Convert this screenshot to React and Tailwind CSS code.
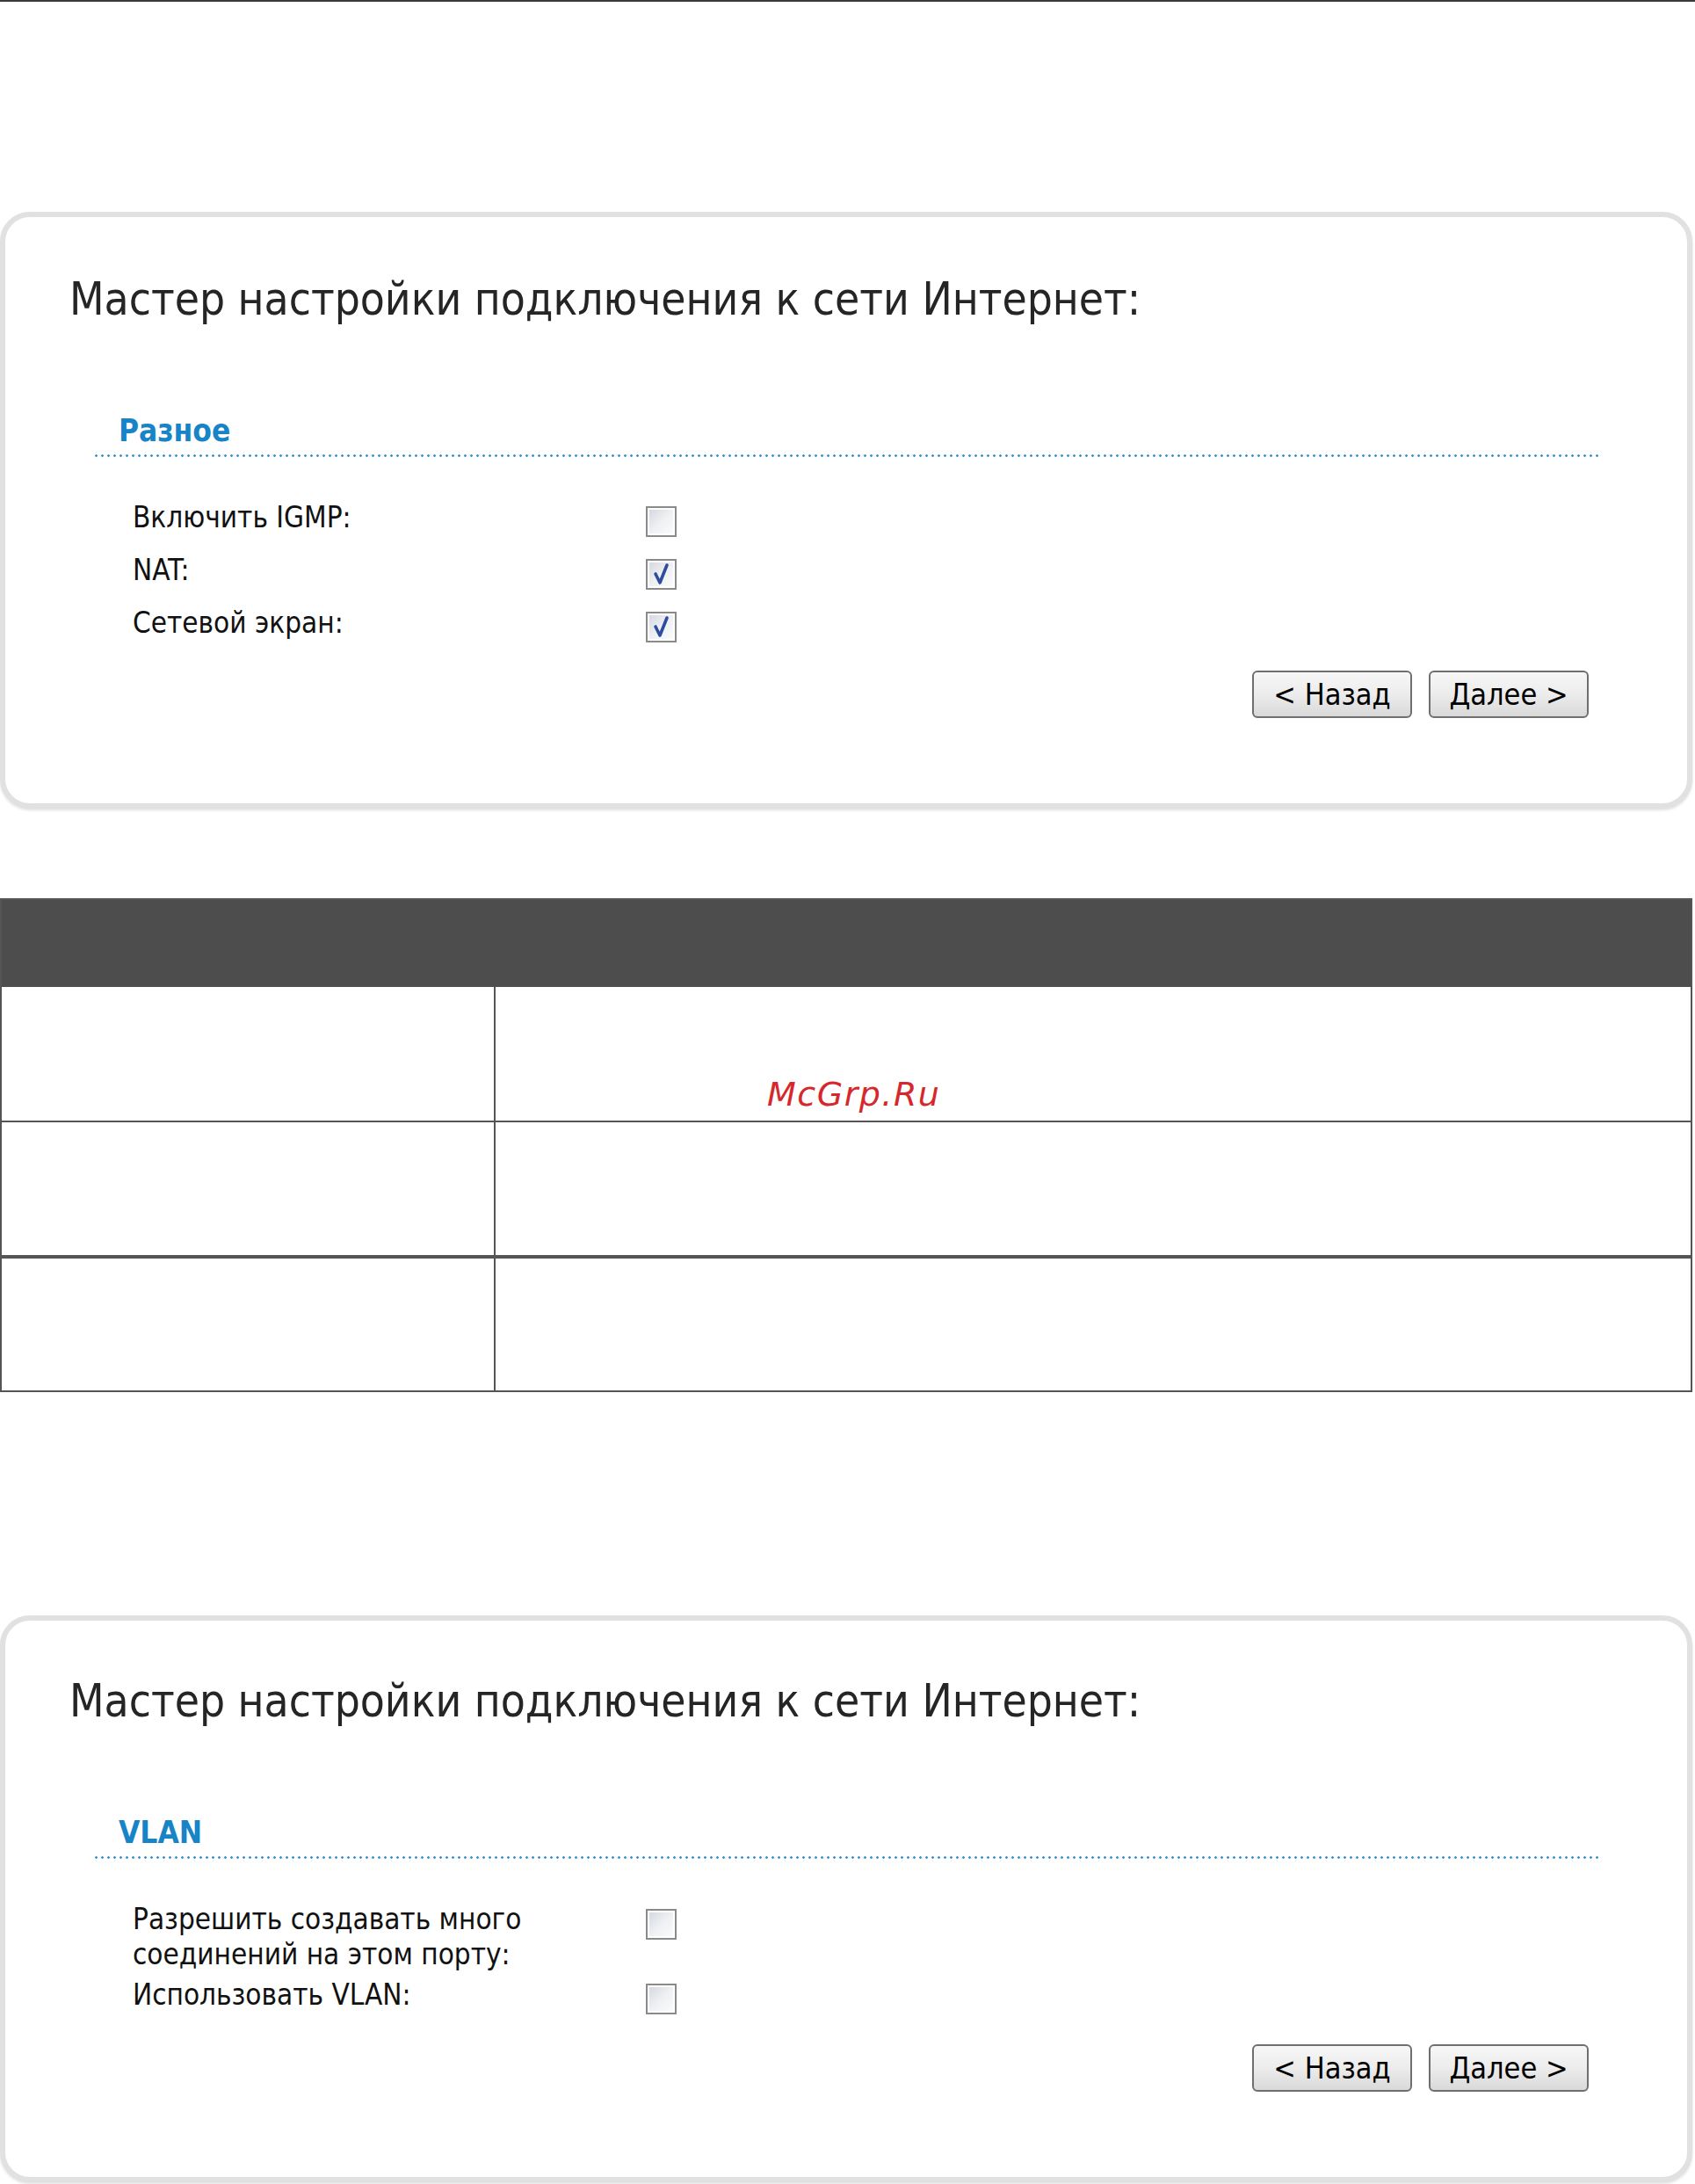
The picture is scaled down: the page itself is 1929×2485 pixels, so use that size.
import React from 'react';

const tahoma = "font-['DejaVu_Sans_Condensed','DejaVu_Sans',sans-serif]";

const Checkbox = ({ checked }) => (
  <div className="w-[35px] h-[35px] border-2 border-[#8a8a8a] bg-white p-[2px] shrink-0">
    <div className="relative w-full h-full bg-gradient-to-br from-[#d5d9e0] via-[#eef0f3] to-[#fbfbfb]">
      {checked && (
        <svg className="absolute inset-0" width="27" height="27" viewBox="0 0 27 27">
          <path d="M7 13 L12 23 L20 3" fill="none" stroke="#2f4d9f" strokeWidth="3.6" strokeLinecap="round" strokeLinejoin="round" />
        </svg>
      )}
    </div>
  </div>
);

const Button = ({ children }) => (
  <button className={`w-[182px] h-[54px] border-2 border-[#6f6f6f] rounded-[6px] bg-gradient-to-b from-[#f7f7f7] via-[#ececec] to-[#d9d9d9] text-[34px] leading-none text-black ${tahoma}`}>
    {children}
  </button>
);

const Dotted = () => (
  <div className="ml-[100px] w-[1714px] h-[3px] bg-[radial-gradient(circle,#3d93cc_1.1px,transparent_1.6px)] bg-[length:7px_3px] bg-repeat-x" />
);

const Panel = ({ heading, children, pt, className = '' }) => (
  <div className={`w-[1926px] border-[6px] border-[#e1e1e1] rounded-[34px] shadow-[0_2px_3px_rgba(0,0,0,0.12)] bg-white ${className}`}>
    <div className={`${pt} pb-[97px]`}>
      <h1 className={`ml-[73px] h-[62px] leading-[62px] text-[51px] font-normal text-[#252525] ${tahoma}`}>
        Мастер настройки подключения к сети Интернет:
      </h1>
      <h2 className={`mt-[98px] ml-[129px] h-[40px] leading-[40px] text-[35px] font-bold text-[#1784c7] ${tahoma}`}>
        {heading}
      </h2>
      <div className="mt-[7px]">
        <Dotted />
      </div>
      {children}
      <div className="flex justify-end gap-[19px] pr-[112px]">
        <Button>&lt; Назад</Button>
        <Button>Далее &gt;</Button>
      </div>
    </div>
  </div>
);

const Row = ({ label, checked }) => (
  <div className="flex h-[60px] pl-[145px]">
    <div className={`w-[584px] pt-[10px] leading-[40px] text-[33px] text-[#111] ${tahoma}`}>{label}</div>
    <div className="mt-[17px]">
      <Checkbox checked={checked} />
    </div>
  </div>
);

export default function App() {
  return (
    <div className="w-[1929px] min-h-[2485px] bg-white">
      <div className="h-[2px] bg-[#3a3a3a]" />

      <Panel heading="Разное" pt="pt-[63px]" className="mt-[239px]">
        <div className="mt-[39px]">
          <Row label="Включить IGMP:" checked={false} />
          <Row label="NAT:" checked />
          <Row label="Сетевой экран:" checked />
        </div>
        <div className="h-[24px]" />
      </Panel>

      <div className="relative mt-[102px] w-[1926px] border-2 border-[#555]">
        <div className="h-[99px] bg-[#4d4d4d]" />
        <div className="grid grid-cols-[562px_1fr] h-[154px] border-b-2 border-[#555]">
          <div className="border-r-2 border-[#555]" />
          <div />
        </div>
        <div className="grid grid-cols-[562px_1fr] h-[155px] border-b-4 border-[#555]">
          <div className="border-r-2 border-[#555]" />
          <div />
        </div>
        <div className="grid grid-cols-[562px_1fr] h-[150px]">
          <div className="border-r-2 border-[#555]" />
          <div />
        </div>
        <div className="absolute left-[871px] top-[196px] text-[38px] leading-[50px] italic tracking-[1.5px] text-[#d6282c] font-['DejaVu_Sans',sans-serif]">
          McGrp.Ru
        </div>
      </div>

      <Panel heading="VLAN" pt="pt-[61px]" className="mt-[254px]">
        <div className="mt-[49px] flex pl-[145px]">
          <div className={`w-[584px] leading-[40px] text-[33px] text-[#111] ${tahoma}`}>
            Разрешить создавать много<br />соединений на этом порту:
          </div>
          <div className="mt-[8px]">
            <Checkbox checked={false} />
          </div>
        </div>
        <div className="mt-[6px] flex pl-[145px]">
          <div className={`w-[584px] leading-[40px] text-[33px] text-[#111] ${tahoma}`}>Использовать VLAN:</div>
          <div className="mt-[7px]">
            <Checkbox checked={false} />
          </div>
        </div>
        <div className="h-[34px]" />
      </Panel>
    </div>
  );
}
